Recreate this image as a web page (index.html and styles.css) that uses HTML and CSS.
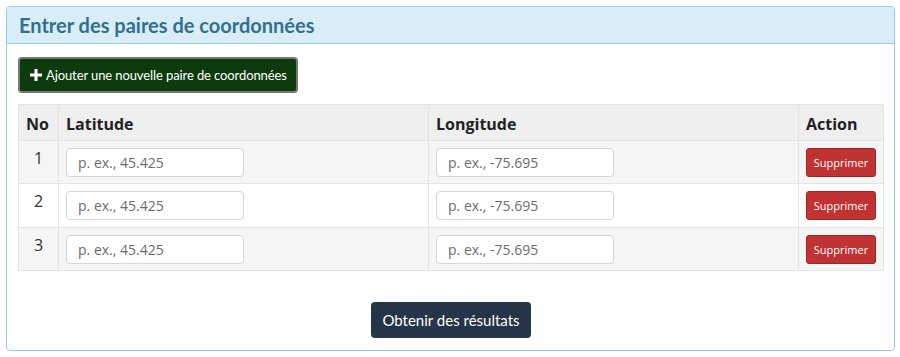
FILE: index.html
```html
<!DOCTYPE html>
<html lang="fr">
<head>
    <meta charset="UTF-8">
    <meta name="viewport" content="width=device-width, initial-scale=1.0">
    <title>Entrer des paires de coordonnées</title>
    <link rel="stylesheet" href="styles.css">
</head>
<body>

<div class="page">
  <!-- Panel -->
  <div class="panel">
    <div class="panel-heading">
      <h3 class="panel-title">Entrer des paires de coordonnées</h3>
    </div>

    <div class="panel-body">
      <button type="button" class="btn-add">
        <svg class="plus" width="12" height="12" viewBox="0 0 12 12"><path d="M4.5 0h3v4.5H12v3H7.5V12h-3V7.5H0v-3h4.5z" fill="#fff"/></svg>
        Ajouter une nouvelle paire de coordonnées
      </button>

      <table class="coords">
        <thead>
          <tr>
            <th class="col-no">No</th>
            <th class="col-coord">Latitude</th>
            <th class="col-coord">Longitude</th>
            <th class="col-action">Action</th>
          </tr>
        </thead>
        <tbody>
          <tr>
            <td class="num">1</td>
            <td><input type="text" placeholder="p. ex., 45.425"></td>
            <td><input type="text" placeholder="p. ex., -75.695"></td>
            <td><button type="button" class="btn-del">Supprimer</button></td>
          </tr>
          <tr>
            <td class="num">2</td>
            <td><input type="text" placeholder="p. ex., 45.425"></td>
            <td><input type="text" placeholder="p. ex., -75.695"></td>
            <td><button type="button" class="btn-del">Supprimer</button></td>
          </tr>
          <tr>
            <td class="num">3</td>
            <td><input type="text" placeholder="p. ex., 45.425"></td>
            <td><input type="text" placeholder="p. ex., -75.695"></td>
            <td><button type="button" class="btn-del">Supprimer</button></td>
          </tr>
        </tbody>
      </table>

      <div class="actions">
        <button type="button" class="btn-submit">Obtenir des résultats</button>
      </div>
    </div>
  </div>
</div>

</body>
</html>
```

FILE: styles.css
```css
body {
    margin: 0;
    font-family: "Open Sans", Arial, sans-serif;
    color: #333;
    background: #fff;
}

.page {
    padding: 6px 5px 0 6px;
}

/* Panel */
.panel {
    border: 1px solid #93cfdc;
    border-radius: 4px;
    overflow: hidden;
}

.panel-heading {
    background-color: #d9edf7;
    border-bottom: 1px solid #93cfdc;
    padding: 0 12px;
    height: 36px;
    display: flex;
    align-items: center;
}

.panel-title {
    margin: 0;
    font-family: Lato, "Liberation Sans", sans-serif;
    font-size: 20px;
    font-weight: bold;
    color: #31708f;
}

.panel-body {
    padding: 13px 10px 12px 11px;
}

/* Add button */
.btn-add {
    display: flex;
    align-items: center;
    gap: 4px;
    height: 36px;
    padding: 0 9px 0 10px;
    background-color: #0e3b0e;
    color: #fff;
    border: 2px solid #777;
    border-radius: 4px;
    font-family: Lato, "Liberation Sans", sans-serif;
    font-size: 13px;
    letter-spacing: -0.1px;
    cursor: pointer;
}

/* Table */
.coords {
    width: 100%;
    margin-top: 11px;
    border-collapse: collapse;
    border: 1px solid #e4e4e4;
}

.coords th,
.coords td {
    border: 1px solid #e4e4e4;
    padding: 7px 7px 6px;
    text-align: left;
    vertical-align: top;
}

.coords th {
    background-color: #efefef;
    font-size: 16px;
    font-weight: bold;
    color: #222;
    height: 24px;
    padding-top: 7px;
    padding-bottom: 4px;
    vertical-align: middle;
}

.col-no { width: 25px; }
.col-action { width: 68px; }

.coords tbody tr:nth-child(odd) td {
    background-color: #f5f5f5;
}

.coords tbody td {
    height: 29.4px;
}

.num {
    text-align: center !important;
    font-size: 16px;
    padding-top: 6px !important;
}

.coords input {
    width: 178px;
    height: 29px;
    box-sizing: border-box;
    border: 1px solid #d6d6d6;
    border-radius: 4px;
    padding: 0 11px;
    font-family: "Open Sans", Arial, sans-serif;
    font-size: 14px;
    background: #fff;
}

.coords input::placeholder {
    color: #6c6c6c;
}

.btn-del {
    width: 70px;
    height: 29px;
    background-color: #c13232;
    color: #fff;
    border: 1px solid #9e2626;
    border-radius: 3px;
    font-family: "Open Sans", Arial, sans-serif;
    font-size: 11px;
    padding: 0;
    cursor: pointer;
}

/* Submit */
.actions {
    display: flex;
    justify-content: center;
    margin-top: 31px;
}

.btn-submit {
    width: 160px;
    height: 36px;
    background-color: #253446;
    color: #fff;
    border: none;
    border-radius: 4px;
    font-family: Lato, "Liberation Sans", sans-serif;
    font-size: 15px;
    cursor: pointer;
}
```
